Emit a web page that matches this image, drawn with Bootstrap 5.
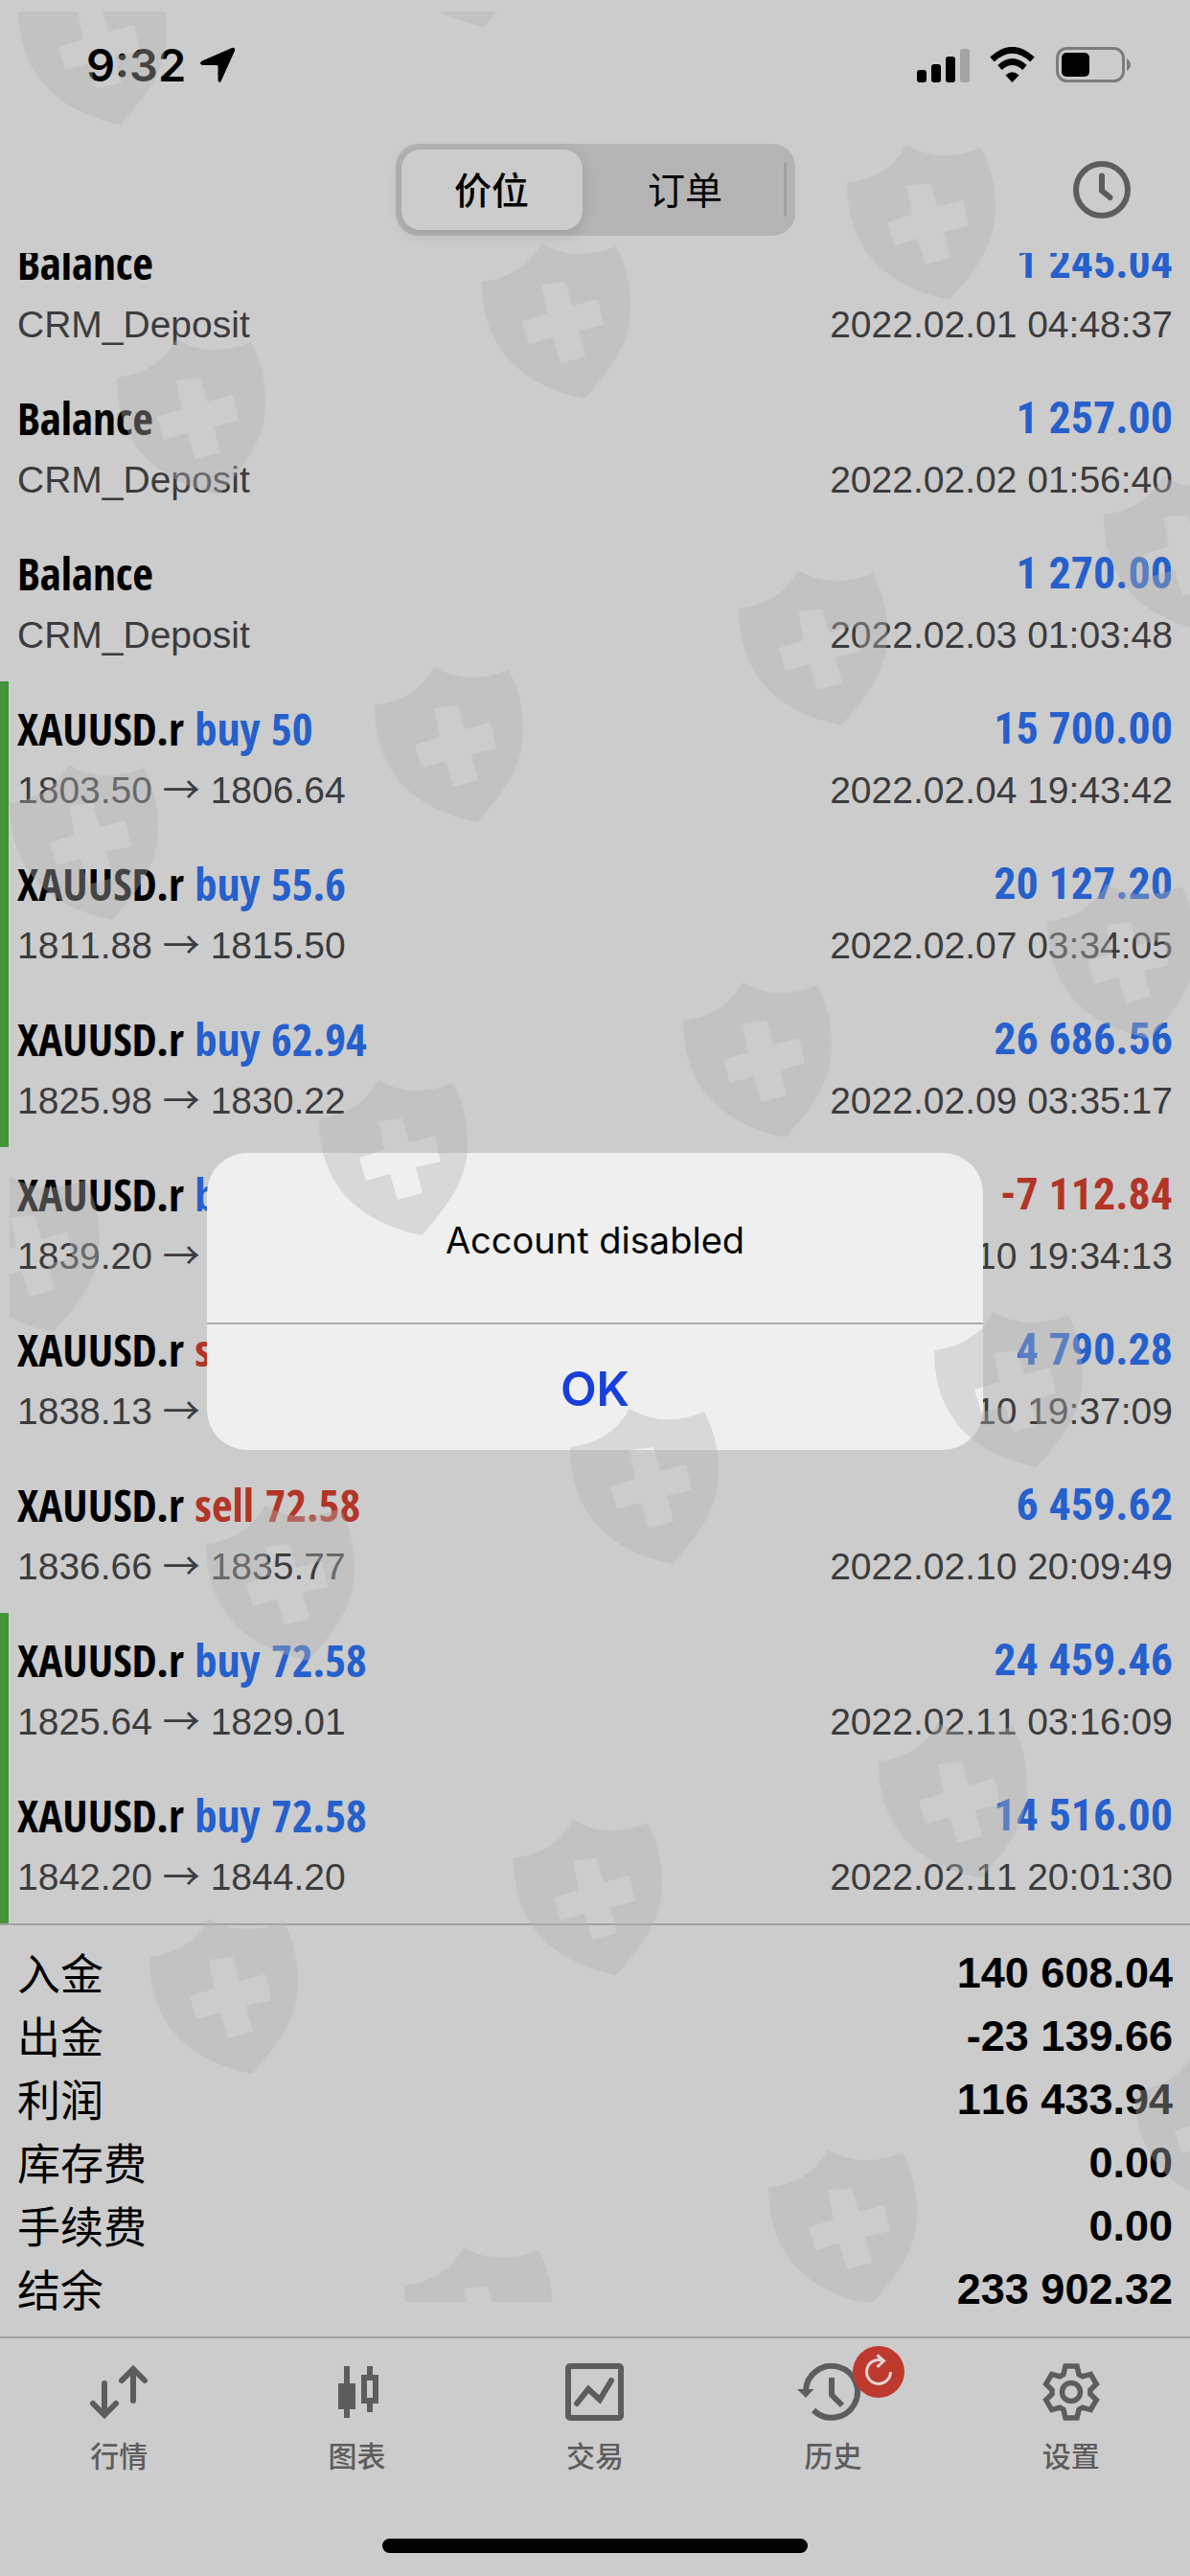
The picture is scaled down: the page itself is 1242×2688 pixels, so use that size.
<!DOCTYPE html>
<html lang="zh-CN">
<head>
<meta charset="utf-8">
<meta name="viewport" content="width=device-width, initial-scale=1">
<title>历史</title>
<link href="https://cdn.jsdelivr.net/npm/bootstrap@5.3.0/dist/css/bootstrap.min.css" rel="stylesheet">
<style>
  :root { --page: #cccccc; --ink: #5d5d5d; --gain: #2560cc; --loss: #b23527; --line: #a3a3a3; }
  body { background: var(--page); color: #000; font-family: "Liberation Sans", "Noto Sans CJK SC", sans-serif; font-kerning: none; }
  .screen { min-height: 100vh; overflow: hidden; }

  .statusbar { height: 136px; padding: 0 60px 0 90px; }
  .clock-text { font: 600 47px/56px Inter, sans-serif; }
  .status-left { gap: 14px; }

  .topbar { height: 128px; padding: 14px 61px 18px; }
  .topbar > div { flex: 1 1 0; }
  .topbar > .segment { flex: none; }
  .segment { background: #b4b4b4; border-radius: 24px; padding: 6px; height: 96px; }
  .segment button { border: 0; background: none; color: #000; border-radius: 20px; width: 189px; padding: 0 0 4px;
    font: 400 39px/56px "Noto Sans CJK SC", sans-serif; }
  .segment button.active { background: var(--page); font-weight: 500; box-shadow: 0 4px 16px rgba(0,0,0,.12); margin-right: 13px; }
  .segment .rule { width: 3px; height: 56px; background: #a0a0a0; margin: 0 3px 0 8px; }
  .icon-btn { border: 0; background: none; padding: 0; line-height: 0; color: var(--ink); }

  .history { overflow: hidden; border-bottom: 2px solid var(--line); }
  .history ul { margin-top: -39px; }
  .deal { height: 162px; padding: 17px 18px 0 9px; border-left: 9px solid transparent; }
  .deal.closed { border-left-color: #45933a; }
  .deal .line1 { font: 700 47px/64px "Open Sans Condensed", "Roboto Condensed", sans-serif; }
  .deal .amount { font-family: "Roboto Condensed", "Open Sans Condensed", sans-serif; font-size: 46px; }
  .deal .line2 { font-size: 39px; line-height: 60px; color: #3c3c3e; padding-top: 3px; }
  .deal .to { font-family: "Noto Sans CJK SC", sans-serif; line-height: 1; }
  .gain { color: var(--gain); }
  .loss { color: var(--loss); }

  .totals { padding: 17px 18px 16px; }
  .totals > div { height: 66px; }
  .totals dt { font: 400 45px/64px "Noto Sans CJK SC", sans-serif; }
  .totals dd { font-size: 45px; line-height: 66px; font-weight: 700; }

  .tabs { border-top: 2px solid var(--line); height: 250px; }
  .tabs nav { padding-top: 26px; }
  .tabs nav a { flex: 1 1 0; color: var(--ink); text-decoration: none; font: 500 30px/44px "Noto Sans CJK SC", sans-serif; }
  .tabs nav svg { margin-bottom: 13px; }
  .tab-badge { right: -30px; top: -18px; line-height: 0; }
  .home { width: 444px; height: 15px; border-radius: 8px; background: #000; margin-bottom: 24px; }

  .alert-layer { padding-top: 28px; }
  .alert-box { width: 810px; background: #efefef; border-radius: 42px; overflow: hidden; }
  .alert-box p { font: 400 38px/60px Inter, sans-serif; padding: 61px 40px 56px; }
  .alert-box button { border: 0; border-top: 2px solid #adadad; background: none; height: 133px;
    color: #173fdc; font: 600 49px/60px Inter, sans-serif; padding: 4px 0 0; }
  .marks { pointer-events: none; }
</style>
<script src="https://cdn.jsdelivr.net/npm/bootstrap@5.3.0/dist/js/bootstrap.bundle.min.js"></script>
</head>
<body>
<div class="screen position-relative d-flex flex-column">

  <header>
    <div class="statusbar d-flex align-items-center justify-content-between">
      <div class="status-left d-flex align-items-center">
        <span class="clock-text">9:32</span>
        <svg width="38" height="38" viewBox="0 0 38 38"><path d="M34 1Q38 0 37 4L23 35Q21 39 19.500 35V20.500Q19.500 19 18 19H3Q-1 17 3 14.500Z"/></svg>
      </div>
      <div class="d-flex align-items-center gap-3">
        <svg width="60" height="37" viewBox="0 0 60 37"><rect x="1" y="23" width="10" height="13" rx="3"/><rect x="16" y="17" width="10" height="19" rx="3"/><rect x="31" y="9" width="10" height="27" rx="3"/><rect x="46" y="1" width="10" height="35" rx="3" fill="#a3a3a3"/></svg>
        <svg width="50" height="38" viewBox="0 0 50 38"><path d="M24.500 37L17.500 29.500Q24.500 23 31.500 29.500Z"/><path d="M11.500 21.500Q24.500 9.500 37.500 21.500M3.500 13Q24.500 -6.500 45.500 13" fill="none" stroke="#000" stroke-width="6.500"/></svg>
        <svg width="80" height="38" viewBox="0 0 80 38" class="ms-1"><rect x="1.500" y="1.500" width="69" height="34" rx="10" fill="none" stroke="#7c7c7c" stroke-width="3"/><rect x="6" y="6" width="29" height="25" rx="5"/><path d="M74 12Q78 15 78 18.500T74 25Z" fill="#7c7c7c"/></svg>
      </div>
    </div>
    <div class="topbar d-flex align-items-center">
      <div></div>
      <div class="segment d-flex align-items-stretch" role="group" aria-label="视图">
        <button type="button" class="active">价位</button>
        <button type="button">订单</button>
        <span class="rule align-self-center"></span>
      </div>
      <div class="text-end">
        <button type="button" class="icon-btn" aria-label="时间"><svg width="62" height="62" viewBox="0 0 62 62" fill="none" stroke="currentColor" stroke-width="6" stroke-linecap="round" stroke-linejoin="round"><circle cx="31" cy="31" r="27"/><path d="M31 16.500V32l8.500 7"/></svg></button>
      </div>
    </div>
  </header>

  <main>
    <section class="history">
      <ul class="list-unstyled mb-0">
        <li class="deal"><div class="line1 d-flex justify-content-between"><span>Balance</span><span class="amount gain">1 245.04</span></div><div class="line2 d-flex justify-content-between"><span>CRM_Deposit</span><span>2022.02.01 04:48:37</span></div></li>
        <li class="deal"><div class="line1 d-flex justify-content-between"><span>Balance</span><span class="amount gain">1 257.00</span></div><div class="line2 d-flex justify-content-between"><span>CRM_Deposit</span><span>2022.02.02 01:56:40</span></div></li>
        <li class="deal"><div class="line1 d-flex justify-content-between"><span>Balance</span><span class="amount gain">1 270.00</span></div><div class="line2 d-flex justify-content-between"><span>CRM_Deposit</span><span>2022.02.03 01:03:48</span></div></li>
        <li class="deal closed"><div class="line1 d-flex justify-content-between"><span>XAUUSD.r <span class="gain">buy 50</span></span><span class="amount gain">15 700.00</span></div><div class="line2 d-flex justify-content-between"><span>1803.50 <span class="to">→</span> 1806.64</span><span>2022.02.04 19:43:42</span></div></li>
        <li class="deal closed"><div class="line1 d-flex justify-content-between"><span>XAUUSD.r <span class="gain">buy 55.6</span></span><span class="amount gain">20 127.20</span></div><div class="line2 d-flex justify-content-between"><span>1811.88 <span class="to">→</span> 1815.50</span><span>2022.02.07 03:34:05</span></div></li>
        <li class="deal closed"><div class="line1 d-flex justify-content-between"><span>XAUUSD.r <span class="gain">buy 62.94</span></span><span class="amount gain">26 686.56</span></div><div class="line2 d-flex justify-content-between"><span>1825.98 <span class="to">→</span> 1830.22</span><span>2022.02.09 03:35:17</span></div></li>
        <li class="deal"><div class="line1 d-flex justify-content-between"><span>XAUUSD.r <span class="gain">b</span></span><span class="amount loss">-7 112.84</span></div><div class="line2 d-flex justify-content-between"><span>1839.20 <span class="to">→</span></span><span>10 19:34:13</span></div></li>
        <li class="deal"><div class="line1 d-flex justify-content-between"><span>XAUUSD.r <span class="loss">s</span></span><span class="amount gain">4 790.28</span></div><div class="line2 d-flex justify-content-between"><span>1838.13 <span class="to">→</span></span><span>10 19:37:09</span></div></li>
        <li class="deal"><div class="line1 d-flex justify-content-between"><span>XAUUSD.r <span class="loss">sell 72.58</span></span><span class="amount gain">6 459.62</span></div><div class="line2 d-flex justify-content-between"><span>1836.66 <span class="to">→</span> 1835.77</span><span>2022.02.10 20:09:49</span></div></li>
        <li class="deal closed"><div class="line1 d-flex justify-content-between"><span>XAUUSD.r <span class="gain">buy 72.58</span></span><span class="amount gain">24 459.46</span></div><div class="line2 d-flex justify-content-between"><span>1825.64 <span class="to">→</span> 1829.01</span><span>2022.02.11 03:16:09</span></div></li>
        <li class="deal closed"><div class="line1 d-flex justify-content-between"><span>XAUUSD.r <span class="gain">buy 72.58</span></span><span class="amount gain">14 516.00</span></div><div class="line2 d-flex justify-content-between"><span>1842.20 <span class="to">→</span> 1844.20</span><span>2022.02.11 20:01:30</span></div></li>
      </ul>
    </section>
    <dl class="totals mb-0">
      <div class="d-flex justify-content-between"><dt>入金</dt><dd class="mb-0">140 608.04</dd></div>
      <div class="d-flex justify-content-between"><dt>出金</dt><dd class="mb-0">-23 139.66</dd></div>
      <div class="d-flex justify-content-between"><dt>利润</dt><dd class="mb-0">116 433.94</dd></div>
      <div class="d-flex justify-content-between"><dt>库存费</dt><dd class="mb-0">0.00</dd></div>
      <div class="d-flex justify-content-between"><dt>手续费</dt><dd class="mb-0">0.00</dd></div>
      <div class="d-flex justify-content-between"><dt>结余</dt><dd class="mb-0">233 902.32</dd></div>
    </dl>
  </main>

  <footer class="tabs d-flex flex-column justify-content-between">
    <nav class="d-flex">
      <a href="#quotes" class="d-flex flex-column align-items-center">
        <svg width="90" height="60" viewBox="0 0 90 60" fill="none" stroke="currentColor" stroke-width="6" stroke-linecap="round"><path d="M30 21V54M18 42L30 54L42 42M60 39V6M48 18L60 6L72 18"/></svg>行情</a>
      <a href="#charts" class="d-flex flex-column align-items-center">
        <svg width="90" height="60" viewBox="0 0 90 60" fill="currentColor"><path d="M31 3h6v18h6v27h-6v9h-6v-9h-6V21h6ZM55 3h6v9h6v30h-6v9h-6v-9h-6V12h6Zm0 15v18h6V18Z" fill-rule="evenodd"/></svg>图表</a>
      <a href="#trade" class="d-flex flex-column align-items-center">
        <svg width="90" height="60" viewBox="0 0 90 60" fill="none" stroke="currentColor" stroke-width="6" stroke-linecap="round" stroke-linejoin="miter"><rect x="17" y="3" width="55" height="54" rx="2"/><path d="M26 42L38 27L50 38L62 18"/></svg>交易</a>
      <a href="#history" class="d-flex flex-column align-items-center">
        <span class="position-relative lh-1 d-flex">
        <svg width="90" height="60" viewBox="0 0 90 60" fill="none" stroke="currentColor" stroke-width="6"><path d="M17 29A27 27 0 1 1 25 49M44 15V33L55 44"/><path d="M8 27H25.500L17 36Z" fill="currentColor" stroke="none"/></svg>
        <span class="tab-badge position-absolute"><svg class="m-0" width="54" height="54" viewBox="0 0 54 54"><circle cx="27" cy="27" r="27" fill="#be3a2e"/><path d="M39.500 27A12.500 12.500 0 1 1 32 15.500M25.500 9.500L32.500 15.500L25.500 22" fill="none" stroke="#e4d6d5" stroke-width="3"/></svg></span></span>历史</a>
      <a href="#settings" class="d-flex flex-column align-items-center">
        <svg width="90" height="60" viewBox="-45 -30 90 60" fill="none" stroke="currentColor" stroke-width="5.500"><path d="M-6-27H6L8.100-18.300L11.800-16.200L20.300-18.600L26.300-8.300L19.900-2.100V2.100L26.300 8.300L20.300 18.600L11.800 16.200L8.100 18.300L6 27H-6L-8.100 18.300L-11.800 16.200L-20.300 18.600L-26.300 8.300L-19.900 2.100V-2.100L-26.300-8.300L-20.300-18.600L-11.800-16.200L-8.100-18.300Z"/><circle r="9.500"/></svg>设置</a>
    </nav>
    <div class="home align-self-center"></div>
  </footer>

  <div class="alert-layer position-absolute top-0 start-0 w-100 h-100 d-flex align-items-center justify-content-center">
    <div class="alert-box text-center" role="alertdialog" aria-label="Account disabled">
      <p class="mb-0">Account disabled</p>
      <button type="button" class="w-100">OK</button>
    </div>
  </div>

  <svg class="marks position-absolute top-0 start-0 w-100 h-100" aria-hidden="true">
    <defs>
      <clipPath id="area"><rect x="10" y="12" width="100%" height="2390"/></clipPath>
      <path id="shield" fill-rule="evenodd" d="M0 40Q43 35 62 0Q97 21 140 3C150 22 155 42 155 66C155 105 135 130 107 162C60 152 0 125 0 40ZM62 43L68 73L42 81L49 105L74 98L82 125L108 118L101 91L127 85L121 58L94 65L87 40Z"/>
    </defs>
    <g clip-path="url(#area)" fill="#b2b2b2" fill-opacity=".38">
      <use href="#shield" x="19" y="-32"/><use href="#shield" x="398" y="-134"/><use href="#shield" x="884" y="151"/>
      <use href="#shield" x="503" y="254"/><use href="#shield" x="122" y="354"/><use href="#shield" x="1152" y="497"/>
      <use href="#shield" x="771" y="595"/><use href="#shield" x="391" y="696"/><use href="#shield" x="10" y="798"/>
      <use href="#shield" x="1093" y="922"/><use href="#shield" x="713" y="1025"/><use href="#shield" x="333" y="1127"/>
      <use href="#shield" x="-51" y="1228"/><use href="#shield" x="975" y="1369"/><use href="#shield" x="595" y="1470"/>
      <use href="#shield" x="215" y="1571"/><use href="#shield" x="917" y="1798"/><use href="#shield" x="536" y="1899"/>
      <use href="#shield" x="156" y="2002"/><use href="#shield" x="1184" y="2142"/><use href="#shield" x="802" y="2243"/>
      <use href="#shield" x="422" y="2345"/>
    </g>
  </svg>
</div>
</body>
</html>
